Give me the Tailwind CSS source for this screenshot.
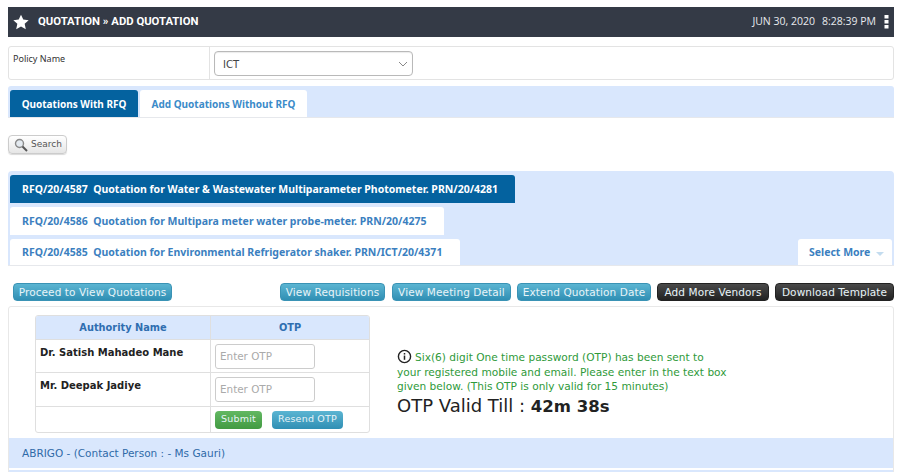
<!DOCTYPE html>
<html>
<head>
<meta charset="utf-8">
<script src="https://cdn.jsdelivr.net/npm/@tailwindcss/browser@4"></script>
</head>
<body class="bg-white font-['DejaVu_Sans',sans-serif] h-[472px] overflow-hidden">
<div class="pl-2 pr-[6px] pt-[7px] flex flex-col">
  <!-- Header -->
  <div class="h-[30px] bg-[#343a46] flex items-center justify-between text-white">
    <div class="flex items-center">
      <svg class="ml-[5px] -mt-[1px] w-[16px] h-[16px]" viewBox="0 0 24 24" fill="#fff"><path d="M12 1l3.400 7.400 8.100.9-6 5.500 1.700 8L12 18.700 4.800 22.800l1.700-8-6-5.500 8.100-.9z"/></svg>
      <span class="ml-[9px] font-['Roboto',sans-serif] text-[11.300px] font-bold">QUOTATION » ADD QUOTATION</span>
    </div>
    <div class="flex items-center font-['Open_Sans',sans-serif] text-[10.500px] text-[#e8eaee]">
      <span>JUN 30, 2020</span><span class="ml-[7px]">8:28:39 PM</span>
      <svg class="ml-[8px] mr-[5px] w-[5px] h-[14px]" viewBox="0 0 5 14" fill="#fff"><rect x=".5" y="0" width="4" height="3.500"/><rect x=".5" y="5" width="4" height="3.500"/><rect x=".5" y="10" width="4" height="3.500"/></svg>
    </div>
  </div>
  <!-- Policy -->
  <div class="mt-[9px] h-[34px] border border-[#e3e3e3] rounded-[3px] flex">
    <div class="w-[201px] border-r border-[#e3e3e3] px-[4px] pt-[5px] font-['Noto_Sans',sans-serif] text-[9px] text-[#333] leading-[14px]">Policy Name</div>
    <div class="pl-[4px] pt-[4px]">
      <div class="w-[199px] h-[25px] border border-[#b9b9b9] rounded-[4px] flex items-center justify-between pl-[8px] pr-[4px] text-[10px] text-[#444] shadow-[inset_0_1px_1px_rgba(0,0,0,0.08)]">
        <span class="pt-[1px]">ICT</span>
        <svg class="w-[10px] h-[6px]" viewBox="0 0 10 6" fill="none" stroke="#888"><path d="M1 1l4 4 4-4"/></svg>
      </div>
    </div>
  </div>
  <!-- Tabs -->
  <div class="mt-[6px] h-[32px] bg-[#d9e7fd] rounded-t-[3px] border-b border-[#e6e8ec] flex pl-[2px] pt-[4px] gap-[2px] font-['Noto_Sans',sans-serif] text-[10px] font-bold">
    <div class="w-[128px] pt-[1px] bg-[#04629f] text-white rounded-t-[3px] flex items-center justify-center">Quotations With RFQ</div>
    <div class="w-[167px] pt-[1px] bg-white text-[#3b8bc9] rounded-t-[3px] flex items-center justify-center">Add Quotations Without RFQ</div>
  </div>
  <!-- Search -->
  <div class="mt-[17px]">
    <div class="w-[59px] h-[19px] border border-[#ccc] rounded-[4px] bg-gradient-to-b from-white to-[#e6e6e6] shadow-[0_1px_1px_rgba(0,0,0,0.15)] flex items-center pl-[5px] text-[9px] text-[#555]">
      <svg class="w-[14px] h-[14px] mr-[3px]" viewBox="0 0 14 14" fill="none"><circle cx="5.500" cy="5.500" r="4" stroke="#8a8a8a" stroke-width="1.400" fill="#e4eaf0"/><path d="M8.500 8.500L13 13" stroke="#555" stroke-width="2"/></svg>
      <span>Search</span>
    </div>
  </div>
  <!-- RFQ list -->
  <div class="mt-[17px] h-[95px] bg-[#d9e7fd] rounded-t-[4px] border-b border-[#e6e8ec] pl-[2px] pt-[4px] pr-[2px] flex flex-col gap-[4px] font-['Noto_Sans',sans-serif] text-[10.500px] font-bold">
    <div class="w-[505px] h-[28px] pt-[2px] bg-[#04629f] text-white rounded-t-[3px] flex items-center pl-[12px] whitespace-pre">RFQ/20/4587  Quotation for Water &amp; Wastewater Multiparameter Photometer. PRN/20/4281</div>
    <div class="w-[434px] h-[28px] pt-[2px] bg-white text-[#3b7fc0] rounded-t-[3px] flex items-center pl-[12px] whitespace-pre">RFQ/20/4586  Quotation for Multipara meter water probe-meter. PRN/20/4275</div>
    <div class="flex justify-between">
      <div class="w-[450px] h-[26px] pt-[2px] bg-white text-[#3b7fc0] rounded-t-[3px] flex items-center pl-[12px] whitespace-pre">RFQ/20/4585  Quotation for Environmental Refrigerator shaker. PRN/ICT/20/4371</div>
      <div class="w-[94px] h-[26px] pt-[2px] bg-white text-[#3b7fc0] rounded-t-[3px] flex items-center pl-[11px] whitespace-pre">Select More<span class="ml-[6px] w-0 h-0 border-x-[4px] border-x-transparent border-t-[4px] border-t-[#c3dcef] mt-[1px]"></span></div>
    </div>
  </div>
  <!-- Buttons -->
  <div class="mt-[17px] pl-[5px] flex justify-between text-[10.500px] tracking-[0.1px] text-[#e8f4f8]">
    <div class="w-[159px] h-[18px] pt-[1px] rounded-[4px] bg-gradient-to-b from-[#5bb5d2] to-[#2f8fb4] border border-[#3a93b5] flex items-center justify-center">Proceed to View Quotations</div>
    <div class="flex gap-[6px]">
      <div class="w-[105px] mr-[1px] h-[18px] pt-[1px] rounded-[4px] bg-gradient-to-b from-[#5bb5d2] to-[#2f8fb4] border border-[#3a93b5] flex items-center justify-center">View Requisitions</div>
      <div class="w-[119px] h-[18px] pt-[1px] rounded-[4px] bg-gradient-to-b from-[#5bb5d2] to-[#2f8fb4] border border-[#3a93b5] flex items-center justify-center">View Meeting Detail</div>
      <div class="w-[134px] h-[18px] pt-[1px] rounded-[4px] bg-gradient-to-b from-[#5bb5d2] to-[#2f8fb4] border border-[#3a93b5] flex items-center justify-center">Extend Quotation Date</div>
      <div class="w-[112px] h-[18px] pt-[1px] rounded-[4px] bg-gradient-to-b from-[#4a4a4a] to-[#222] border border-[#222] flex items-center justify-center">Add More Vendors</div>
      <div class="w-[119px] h-[18px] pt-[1px] rounded-[4px] bg-gradient-to-b from-[#4a4a4a] to-[#222] border border-[#222] flex items-center justify-center">Download Template</div>
    </div>
  </div>
  <!-- Panel -->
  <div class="mt-[5px] border border-[#e8e8e8] rounded-t-[3px]">
    <div class="h-[131px] pl-[26px] pt-[8px] flex">
      <div class="w-[335px] h-[118px] border border-[#dfdfdf] rounded-[3px] overflow-hidden text-[10px]">
        <div class="h-[24px] bg-[#d9e7fd] flex border-b border-[#dfdfdf] font-bold text-[#2f6eb0] text-[9.800px]">
          <div class="w-[175px] pt-[2px] border-r border-[#dfdfdf] flex items-center justify-center">Authority Name</div>
          <div class="flex-1 pt-[2px] flex items-center justify-center">OTP</div>
        </div>
        <div class="h-[33px] flex border-b border-[#dfdfdf]">
          <div class="w-[175px] border-r border-[#dfdfdf] pl-[4px] pt-[5px] font-bold text-[#222]">Dr. Satish Mahadeo Mane</div>
          <div class="pl-[4px] pt-[4px]"><div class="w-[100px] h-[25px] border border-[#ccc] rounded-[3px] pl-[4px] flex items-center text-[10.400px] text-[#aaa]">Enter OTP</div></div>
        </div>
        <div class="h-[34px] flex border-b border-[#dfdfdf]">
          <div class="w-[175px] border-r border-[#dfdfdf] pl-[4px] pt-[5px] font-bold text-[#222]">Mr. Deepak Jadiye</div>
          <div class="pl-[4px] pt-[4px]"><div class="w-[100px] h-[25px] border border-[#ccc] rounded-[3px] pl-[4px] flex items-center text-[10.400px] text-[#aaa]">Enter OTP</div></div>
        </div>
        <div class="h-[26px] flex">
          <div class="w-[175px] border-r border-[#dfdfdf]"></div>
          <div class="pl-[4px] pt-[4px] flex gap-[10px] text-[9.500px] tracking-[0.2px] text-[#e8f4f8]">
            <div class="w-[47px] h-[18px] pb-[1px] rounded-[4px] bg-gradient-to-b from-[#62b862] to-[#429a42] flex items-center justify-center">Submit</div>
            <div class="w-[71px] h-[18px] pb-[1px] rounded-[4px] bg-gradient-to-b from-[#5bb5d2] to-[#2f8fb4] flex items-center justify-center">Resend OTP</div>
          </div>
        </div>
      </div>
      <div class="ml-[27px] pt-[34px] w-[345px]">
        <div class="text-[10.600px] leading-[14.500px] text-[#2f9a3a]">
          <svg class="inline-block w-[15px] h-[15px] mr-[3px] align-[-3px]" viewBox="0 0 16 16" fill="none"><circle cx="8" cy="8" r="6.500" stroke="#222" stroke-width="1.500"/><rect x="7.200" y="7" width="1.600" height="4.500" fill="#222"/><rect x="7.200" y="4.300" width="1.600" height="1.600" fill="#222"/></svg>Six(6) digit One time password (OTP) has been sent to<br>your registered mobile and email. Please enter in the text box<br>given below. (This OTP is only valid for 15 minutes)
        </div>
        <div class="pt-[1px] text-[18px] leading-[21px] text-[#222]">OTP Valid Till : <span class="font-bold text-[16.500px]">42m 38s</span></div>
      </div>
    </div>
    <div class="h-[30px] pt-[1px] bg-[#d9e7fd] flex items-center pl-[13px] text-[10.500px] text-[#2f6aa8]">ABRIGO - (Contact Person : - Ms Gauri)</div>
    <div class="mt-[2px] h-[2px] bg-[#d9e7fd]"></div>
  </div>
</div>
</body>
</html>
